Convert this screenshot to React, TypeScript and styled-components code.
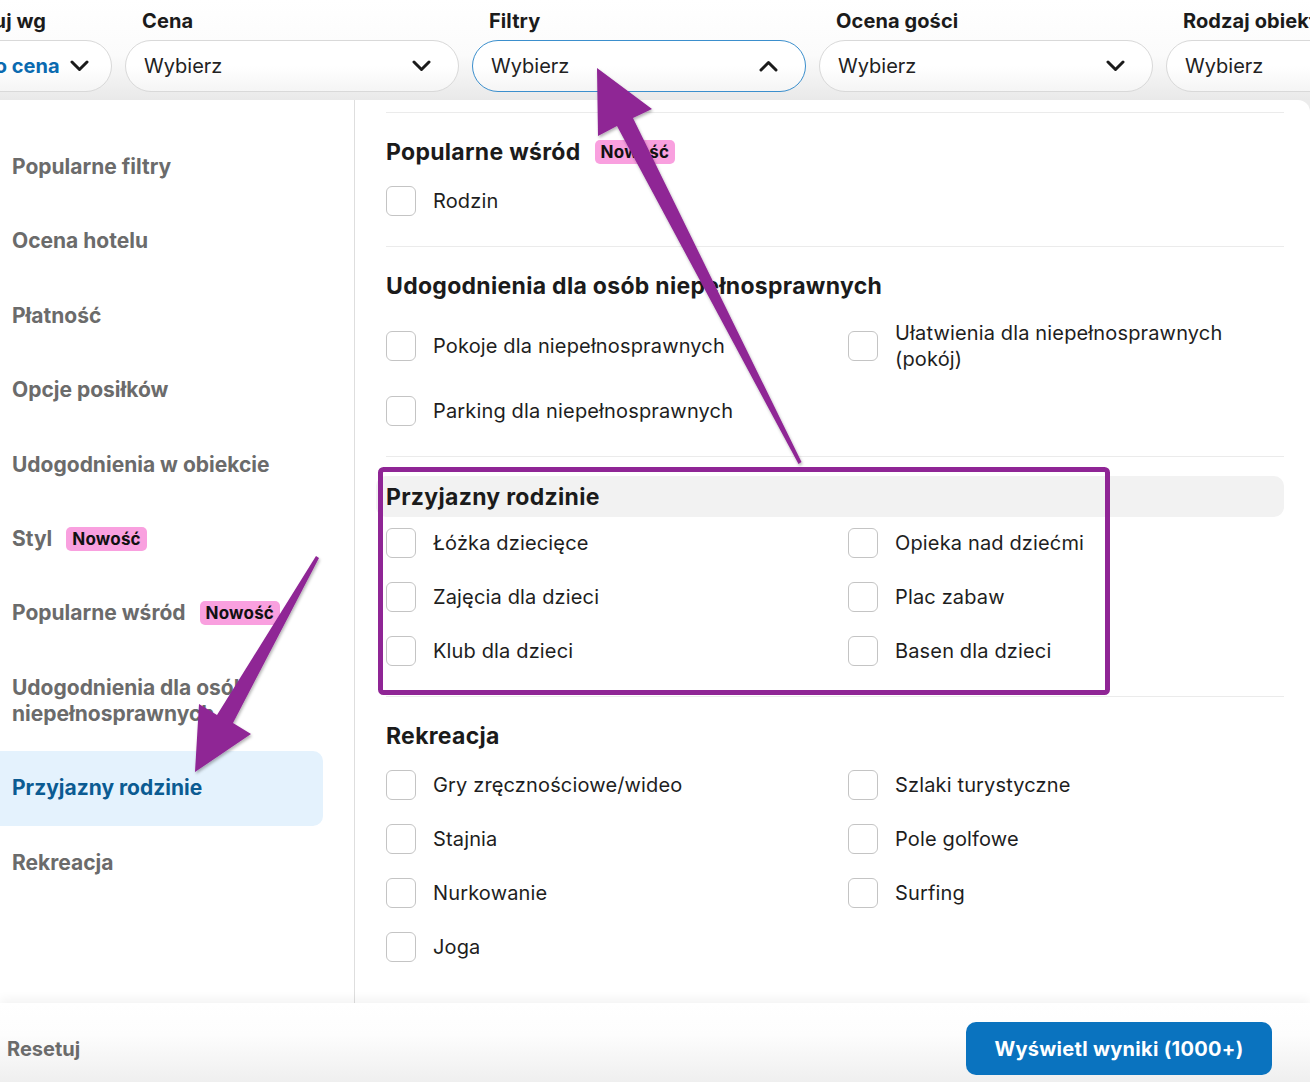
import React from 'react';
import styled, { createGlobalStyle, css } from 'styled-components';

const GlobalStyle = createGlobalStyle`
  html, body {
    margin: 0;
    padding: 0;
    width: 1310px;
    height: 1082px;
    overflow: hidden;
    background: #ffffff;
  }
  body {
    font-family: Inter, "Noto Sans", "Liberation Sans", sans-serif;
    color: #1b1b1b;
  }
  * { box-sizing: border-box; }
`;

const Page = styled.div`
  position: relative;
  width: 1310px;
  height: 1082px;
  display: flex;
  flex-direction: column;
  overflow: hidden;
  background: #ececec;
`;

const TopBar = styled.div`
  height: 100px;
  flex: none;
  display: flex;
  gap: 13px;
  margin-left: -65px;
  padding-top: 9px;
  background: linear-gradient(#ffffff 0%, #fbfbfb 55%, #e9e9e9 100%);
`;

const FilterColumn = styled.div<{ $w: number }>`
  flex: none;
  width: ${(p) => p.$w}px;
  display: flex;
  flex-direction: column;
`;

const FilterLabel = styled.div`
  font-size: 20px;
  font-weight: 700;
  line-height: 24px;
  padding-left: 17px;
  margin-bottom: 7px;
  white-space: nowrap;
  color: #1b1b1b;
  letter-spacing: 0.1px;
`;

const Select = styled.div<{ $open?: boolean }>`
  height: 52px;
  border-radius: 26px;
  border: 1px solid ${(p) => (p.$open ? '#3b8fcd' : '#d9d9d9')};
  background: linear-gradient(#ffffff 0%, #ffffff 50%, #f5f5f5 100%);
  display: flex;
  align-items: center;
  justify-content: space-between;
  padding: 0 27px 0 18px;
  gap: 10px;
`;

const SelectText = styled.span<{ $accent?: boolean }>`
  font-size: 20px;
  white-space: nowrap;
  ${(p) =>
    p.$accent
      ? css`
          color: #0a6ab0;
          font-weight: 700;
        `
      : css`
          color: #222;
          font-weight: 400;
        `}
`;

const Body = styled.div`
  flex: 1;
  display: grid;
  grid-template-columns: 355px 1fr;
  background: #ffffff;
  border-top-right-radius: 12px;
  overflow: hidden;
`;

const Sidebar = styled.div`
  border-right: 1px solid #dedede;
  padding-top: 30px;
  display: flex;
  flex-direction: column;
`;

const SideItem = styled.div<{ $active?: boolean }>`
  margin-right: 31px;
  padding: 24px 12px 24.4px;
  font-size: 21px;
  line-height: 26px;
  font-weight: 700;
  border-radius: 0 10px 10px 0;
  display: flex;
  align-items: center;
  gap: 14px;
  color: ${(p) => (p.$active ? '#0b5b92' : '#6b6b6b')};
  background: ${(p) => (p.$active ? '#e4f2fd' : 'transparent')};
`;

const Badge = styled.span`
  display: inline-block;
  background: #f9a0df;
  color: #111;
  font-size: 17px;
  font-weight: 700;
  line-height: 22px;
  padding: 1px 6px;
  border-radius: 5px;
  white-space: nowrap;
  letter-spacing: 0.2px;
`;

const Content = styled.div`
  padding: 12px 26px 0 31px;
  overflow: hidden;
`;

const Section = styled.section<{ $highlight?: boolean }>`
  border-top: 1px solid #ebebeb;
  padding: ${(p) => (p.$highlight ? '19px' : '25px')} 0 30px;
`;

const SectionTitle = styled.h3<{ $highlight?: boolean }>`
  margin: 0 0 20px;
  font-size: 23px;
  line-height: 28px;
  font-weight: 700;
  letter-spacing: 0.3px;
  color: #1b1b1b;
  display: flex;
  align-items: center;
  gap: 14px;
  ${(p) =>
    p.$highlight &&
    css`
      margin: 0 0 11px -10px;
      padding: 6.5px 10px;
      background: #f2f2f2;
      border-radius: 10px;
    `}
`;

const OptionGrid = styled.div`
  display: grid;
  grid-template-columns: 1fr 1fr;
  column-gap: 26px;
  row-gap: 24px;
  align-items: center;
`;

const Option = styled.label`
  display: flex;
  align-items: center;
  gap: 17px;
`;

const Box = styled.span`
  flex: none;
  width: 30px;
  height: 30px;
  border: 1px solid #c4c4c4;
  border-radius: 6px;
  background: #fff;
`;

const OptionText = styled.span`
  font-size: 20px;
  line-height: 26px;
  color: #1e1e1e;
  white-space: pre-line;
  letter-spacing: 0.15px;
`;

const Footer = styled.div`
  height: 79px;
  flex: none;
  display: flex;
  align-items: center;
  justify-content: space-between;
  padding: 12px 38px 0 7px;
  background: linear-gradient(#ffffff 0%, #fdfdfd 40%, #efefef 100%);
  box-shadow: 0 -4px 10px rgba(0, 0, 0, 0.05);
  position: relative;
`;

const ResetButton = styled.span`
  font-size: 20px;
  font-weight: 700;
  color: #6b6b6b;
`;

const PrimaryButton = styled.button`
  height: 53px;
  width: 306px;
  padding: 0;
  border: none;
  border-radius: 10px;
  background: #0a73bf;
  color: #fff;
  font-family: inherit;
  font-size: 20px;
  font-weight: 700;
  letter-spacing: 0.3px;
`;

const Overlay = styled.svg`
  position: absolute;
  left: 0;
  top: 0;
  width: 1310px;
  height: 1082px;
  pointer-events: none;
`;

const Chevron = ({ up }: { up?: boolean }) => (
  <svg width="19" height="12" viewBox="0 0 19 12" style={{ flex: 'none' }}>
    <path
      d={up ? 'M2 10 L9.5 2.5 L17 10' : 'M2 2 L9.5 9.5 L17 2'}
      fill="none"
      stroke="#1b1b1b"
      strokeWidth="3"
      strokeLinecap="round"
      strokeLinejoin="round"
    />
  </svg>
);

const filters = [
  { label: 'Sortuj wg', value: 'Tylko cena', width: 177, accent: true },
  { label: 'Cena', value: 'Wybierz', width: 334 },
  { label: 'Filtry', value: 'Wybierz', width: 334, open: true },
  { label: 'Ocena gości', value: 'Wybierz', width: 334 },
  { label: 'Rodzaj obiektu', value: 'Wybierz', width: 334 },
];

const sideItems = [
  { label: 'Popularne filtry' },
  { label: 'Ocena hotelu' },
  { label: 'Płatność' },
  { label: 'Opcje posiłków' },
  { label: 'Udogodnienia w obiekcie' },
  { label: 'Styl', badge: true },
  { label: 'Popularne wśród', badge: true },
  { label: 'Udogodnienia dla osób niepełnosprawnych' },
  { label: 'Przyjazny rodzinie', active: true },
  { label: 'Rekreacja' },
];

const sections = [
  { title: 'Popularne wśród', badge: true, items: ['Rodzin'] },
  {
    title: 'Udogodnienia dla osób niepełnosprawnych',
    items: [
      'Pokoje dla niepełnosprawnych',
      'Ułatwienia dla niepełnosprawnych\n(pokój)',
      'Parking dla niepełnosprawnych',
    ],
  },
  {
    title: 'Przyjazny rodzinie',
    highlight: true,
    items: [
      'Łóżka dziecięce',
      'Opieka nad dziećmi',
      'Zajęcia dla dzieci',
      'Plac zabaw',
      'Klub dla dzieci',
      'Basen dla dzieci',
    ],
  },
  {
    title: 'Rekreacja',
    items: [
      'Gry zręcznościowe/wideo',
      'Szlaki turystyczne',
      'Stajnia',
      'Pole golfowe',
      'Nurkowanie',
      'Surfing',
      'Joga',
    ],
  },
];

const ARROW = '#8f2595';

export default function App() {
  return (
    <>
      <GlobalStyle />
      <Page>
        <TopBar>
          {filters.map((f) => (
            <FilterColumn key={f.label} $w={f.width}>
              <FilterLabel>{f.label}</FilterLabel>
              <Select $open={f.open}>
                <SelectText $accent={f.accent}>{f.value}</SelectText>
                <Chevron up={f.open} />
              </Select>
            </FilterColumn>
          ))}
        </TopBar>

        <Body>
          <Sidebar>
            {sideItems.map((s) => (
              <SideItem key={s.label} $active={s.active}>
                <span>{s.label}</span>
                {s.badge && <Badge>Nowość</Badge>}
              </SideItem>
            ))}
          </Sidebar>
          <Content>
            {sections.map((sec) => (
              <Section key={sec.title} $highlight={sec.highlight}>
                <SectionTitle $highlight={sec.highlight}>
                  <span>{sec.title}</span>
                  {sec.badge && <Badge>Nowość</Badge>}
                </SectionTitle>
                <OptionGrid>
                  {sec.items.map((it) => (
                    <Option key={it}>
                      <Box />
                      <OptionText>{it}</OptionText>
                    </Option>
                  ))}
                </OptionGrid>
              </Section>
            ))}
          </Content>
        </Body>

        <Footer>
          <ResetButton>Resetuj</ResetButton>
          <PrimaryButton>Wyświetl wyniki (1000+)</PrimaryButton>
        </Footer>

        <Overlay viewBox="0 0 1310 1082">
          <defs>
            <filter id="shadow" x="-20%" y="-20%" width="140%" height="140%">
              <feDropShadow dx="1" dy="2" stdDeviation="1.8" floodColor="#000" floodOpacity="0.3" />
            </filter>
          </defs>
          <rect
            x="380.5"
            y="469.5"
            width="727"
            height="223"
            rx="3"
            fill="none"
            stroke={ARROW}
            strokeWidth="5"
          />
          <polygon
            filter="url(#shadow)"
            fill={ARROW}
            points="597,68 652,109 633,118 801.5,462 798.5,464 617,126 598,136"
          />
          <polygon
            filter="url(#shadow)"
            fill={ARROW}
            points="319,558 316,556 217,715 199,704 195,772 251,734 233,723"
          />
        </Overlay>
      </Page>
    </>
  );
}
